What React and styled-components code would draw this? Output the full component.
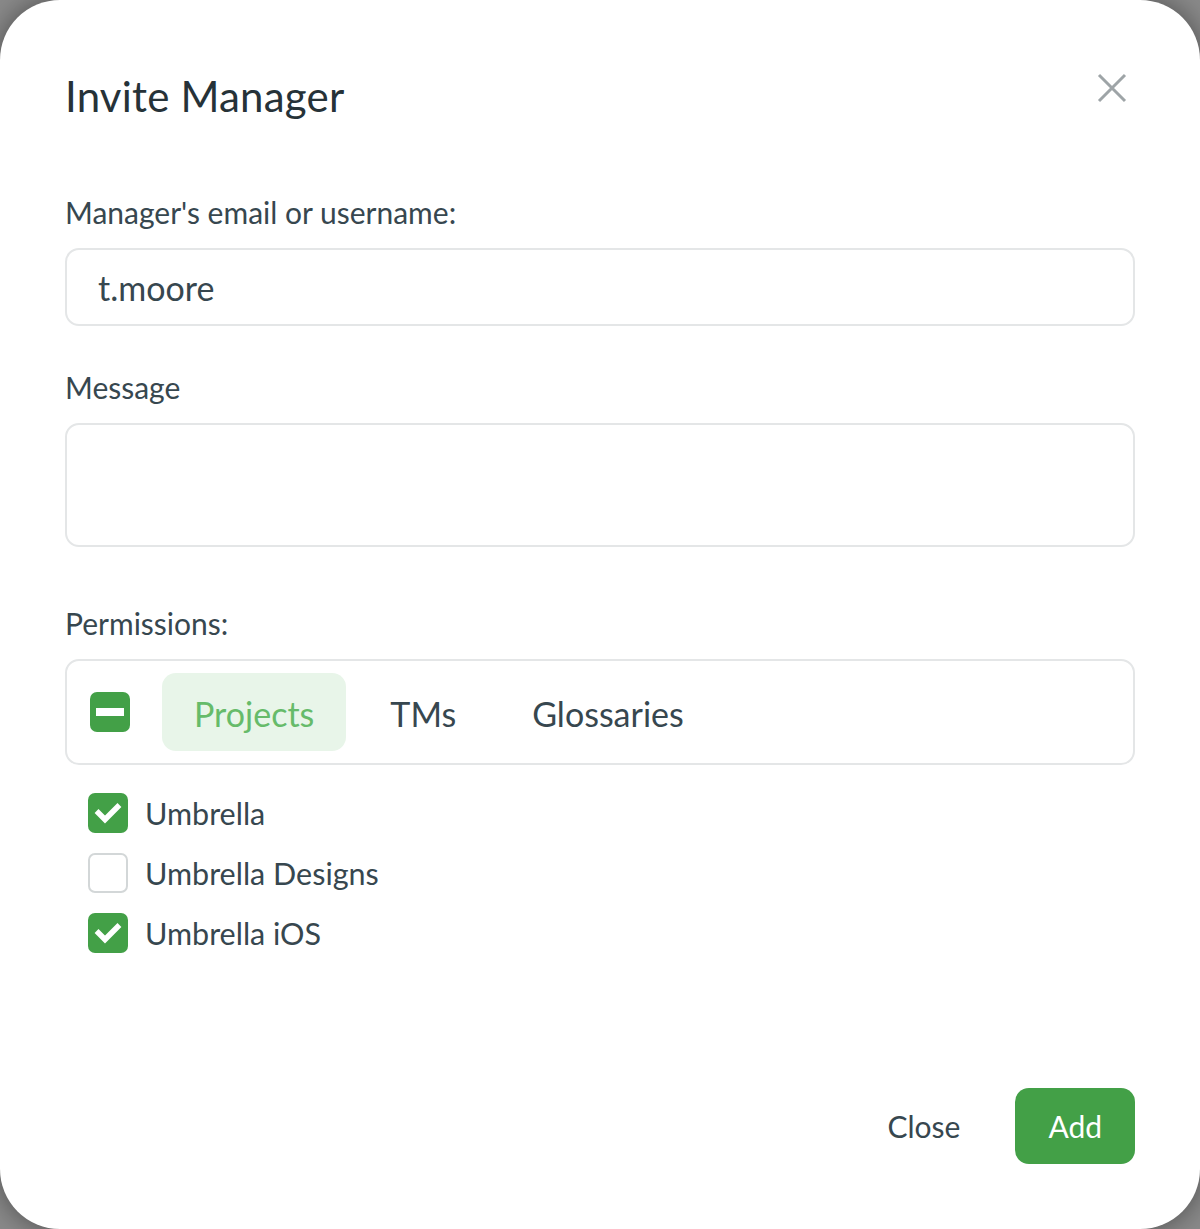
import React, { useState } from 'react';
import styled, { createGlobalStyle } from 'styled-components';

const GlobalStyle = createGlobalStyle`
  html, body {
    margin: 0;
    padding: 0;
    background: #8a8a8a;
  }
  * {
    box-sizing: border-box;
  }
`;

const Modal = styled.div`
  min-height: 1229px;
  background: #fff;
  border-radius: 60px;
  box-shadow: 0 0 28px rgba(0, 0, 0, 0.45);
  padding: 60px 65px 65px;
  display: flex;
  flex-direction: column;
  font-family: Lato, "Noto Sans", sans-serif;
  color: #37474f;
`;

const Header = styled.div`
  display: flex;
  align-items: center;
  justify-content: space-between;
  height: 72px;
`;

const Title = styled.h1`
  margin: 0;
  font-size: 42px;
  font-weight: 400;
  color: #263238;
  letter-spacing: 0.2px;
`;

const CloseIcon = styled.button`
  align-self: flex-start;
  border: none;
  background: none;
  padding: 0;
  margin: 10px 5px 0 0;
  width: 36px;
  height: 36px;
  display: flex;
  align-items: center;
  justify-content: center;
  cursor: pointer;
`;

const Label = styled.div`
  font-size: 30px;
  line-height: 36px;
  margin-top: ${(p) => p.$top}px;
  margin-bottom: 18px;
  color: #37474f;
`;

const Input = styled.input`
  height: 78px;
  width: 100%;
  border: 2px solid #e4e6e7;
  border-radius: 14px;
  padding: 0 31px;
  font-family: inherit;
  font-size: 34px;
  color: #37474f;
  outline: none;
`;

const TextArea = styled.textarea`
  height: 124px;
  width: 100%;
  border: 2px solid #e4e6e7;
  border-radius: 14px;
  padding: 20px 31px;
  font-family: inherit;
  font-size: 32px;
  resize: none;
  outline: none;
`;

const TabsBox = styled.div`
  height: 106px;
  border: 2px solid #e4e6e7;
  border-radius: 14px;
  display: flex;
  align-items: center;
  padding: 0 23px;
`;

const Tabs = styled.div`
  display: flex;
  gap: 12px;
  margin-left: 32px;
`;

const Tab = styled.button`
  height: 78px;
  padding: 2px 32px 0;
  border: none;
  border-radius: 14px;
  font-family: inherit;
  font-size: 34px;
  background: ${(p) => (p.$active ? '#e8f5e9' : 'transparent')};
  color: ${(p) => (p.$active ? '#66bb6a' : '#37474f')};
  cursor: pointer;
`;

const Box = styled.span`
  width: 40px;
  height: 40px;
  border-radius: 7px;
  flex-shrink: 0;
  display: flex;
  align-items: center;
  justify-content: center;
  background: ${(p) => (p.$on ? '#43a047' : '#fff')};
  border: ${(p) => (p.$on ? 'none' : '2px solid #d3d7d8')};
`;

const Dash = styled.span`
  width: 28px;
  height: 8px;
  background: #fff;
`;

const List = styled.div`
  margin-top: 18px;
  padding-left: 23px;
  display: flex;
  flex-direction: column;
`;

const Row = styled.label`
  height: 60px;
  display: flex;
  align-items: center;
  gap: 17px;
  font-size: 30.5px;
  color: #37474f;
  cursor: pointer;
`;

const Footer = styled.div`
  margin-top: auto;
  display: flex;
  justify-content: flex-end;
  align-items: center;
  gap: 23px;
`;

const Button = styled.button`
  height: 76px;
  padding: 0 ${(p) => (p.$primary ? 33 : 32)}px;
  border: none;
  border-radius: 14px;
  font-family: inherit;
  font-size: 30px;
  background: ${(p) => (p.$primary ? '#43a047' : 'transparent')};
  color: ${(p) => (p.$primary ? '#fff' : '#37474f')};
  cursor: pointer;
`;

const Check = () => (
  <svg width="28" height="28" viewBox="0 0 28 28">
    <polyline points="4.5,14 11,20.5 23.5,8" fill="none" stroke="#fff" strokeWidth="5.5" strokeLinecap="square" />
  </svg>
);

const projects = [
  { name: 'Umbrella', on: true },
  { name: 'Umbrella Designs', on: false },
  { name: 'Umbrella iOS', on: true },
];

export default function App() {
  const [tab, setTab] = useState('Projects');

  return (
    <>
      <GlobalStyle />
      <Modal>
        <Header>
          <Title>Invite Manager</Title>
          <CloseIcon aria-label="close">
            <svg width="30" height="30" viewBox="0 0 30 30">
              <path d="M2 2 L28 28 M28 2 L2 28" stroke="#9ea4a7" strokeWidth="3" />
            </svg>
          </CloseIcon>
        </Header>

        <Label $top={62}>Manager's email or username:</Label>
        <Input defaultValue="t.moore" />

        <Label $top={43}>Message</Label>
        <TextArea />

        <Label $top={58}>Permissions:</Label>
        <TabsBox>
          <Box $on>
            <Dash />
          </Box>
          <Tabs>
            {['Projects', 'TMs', 'Glossaries'].map((t) => (
              <Tab key={t} $active={tab === t} onClick={() => setTab(t)}>
                {t}
              </Tab>
            ))}
          </Tabs>
        </TabsBox>

        <List>
          {projects.map((p) => (
            <Row key={p.name}>
              <Box $on={p.on}>{p.on && <Check />}</Box>
              {p.name}
            </Row>
          ))}
        </List>

        <Footer>
          <Button>Close</Button>
          <Button $primary>Add</Button>
        </Footer>
      </Modal>
    </>
  );
}
